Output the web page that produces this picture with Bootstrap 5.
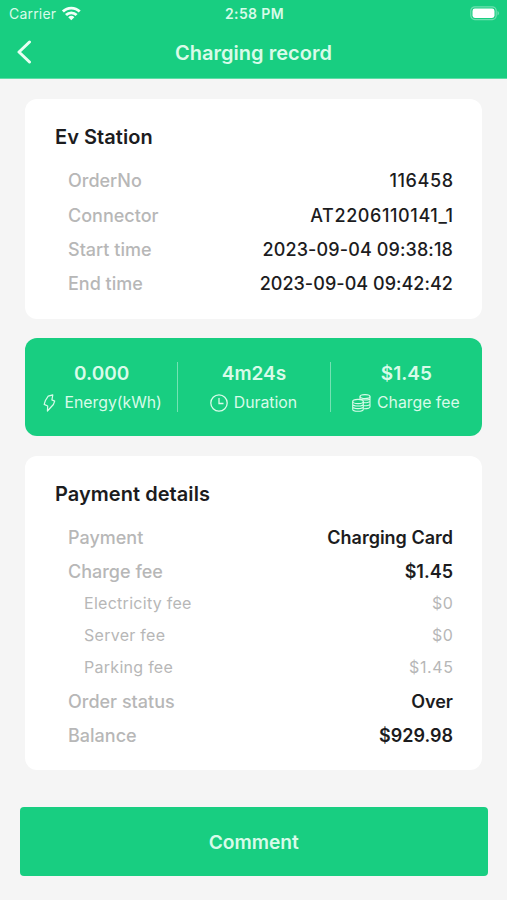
<!DOCTYPE html>
<html lang="en">
<head>
<meta charset="utf-8">
<meta name="viewport" content="width=device-width, initial-scale=1">
<title>Charging record</title>
<link href="https://cdn.jsdelivr.net/npm/bootstrap@5.3.0/dist/css/bootstrap.min.css" rel="stylesheet">
<style>
  :root { --brand: #18ce81; --ink: #1c1c1e; --muted: #b7b7b7; --mint: #d8fbe9; }
  body { font-family: Inter, "Liberation Sans", sans-serif; background: #f5f5f5; color: var(--ink); height: 900px; overflow: hidden; }
  .app-head { background: var(--brand); height: 79px; color: var(--mint); border-bottom: 1px solid #5fdda7; }
  .status-bar { height: 27px; font-size: 14px; padding: 0 7px 0 9px; }
  .status-bar > div { flex: 1 1 0; }
  .carrier { letter-spacing: .2px; }
  .clock { font-weight: 600; letter-spacing: .4px; }
  .title-bar { height: 51px; padding: 0 17px; }
  .title-bar > div { flex: 1 1 0; }
  .title-bar svg { margin-bottom: 2px; }
  .title-bar h1 { font-size: 20px; font-weight: 600; letter-spacing: .03px; }
  .panel { margin: 0 25px; border-radius: 12px; }
  .info-panel { background: #fff; padding: 22px 29px 0 30px; }
  .info-panel h2 { font-size: 20px; font-weight: 600; line-height: 32px; margin: 0 0 11px; letter-spacing: .05px; }
  .line { height: 34.2px; padding-left: 13px; font-size: 18px; }
  .line dt { font-weight: 500; color: var(--muted); }
  .line dd { font-weight: 500; margin: 0; }
  .line .strong { font-weight: 600; }
  .line .order-code { letter-spacing: .6px; margin-right: -.6px; }
  .line .stamp { letter-spacing: .12px; }
  .line .stamp-end { letter-spacing: .04px; }
  .subline { height: 31.9px; padding-left: 29px; font-size: 16px; letter-spacing: .28px; color: var(--muted); }
  .subline dt, .subline dd { font-weight: 400; margin: 0; }
  .subline dd { letter-spacing: .6px; margin-right: -.5px; }
  .station { height: 220.5px; margin-top: 19.5px; }
  .station h2 { margin-bottom: 11.4px; }
  .summary { background: var(--brand); color: var(--mint); height: 97.5px; margin-top: 19px; margin-bottom: 20.5px; }
  .metric { padding-top: 23px; }
  .metric + .metric::before { content: ""; width: 1px; height: 50px; background: #74e2b3; position: absolute; left: 0; top: 24px; }
  .metric strong { font-size: 19px; font-weight: 600; line-height: 26px; padding-left: 1px; }
  .metric span { font-size: 15.8px; line-height: 31px; }
  .metric .energy-label { padding-left: 3px; }
  .metric .bolt-icon { margin-right: 8px; }
  .metric .clock-icon { margin-right: 6px; }
  .metric .coins-icon { margin-right: 6px; }
  .payment { height: 314px; }
  .payment h2 { margin-bottom: 10.2px; }
  .payment .subline { position: relative; top: -1.3px; }
  .comment-btn, .comment-btn:hover { background: var(--brand); color: var(--mint); height: 68.5px; width: 467.5px; margin: 37px 0 0 20px; border-radius: 4px; font-size: 19.2px; font-weight: 600; border: 0; padding-top: 8px; }
</style>
<script src="https://cdn.jsdelivr.net/npm/bootstrap@5.3.0/dist/js/bootstrap.bundle.min.js"></script>
</head>
<body>
<header class="app-head">
  <div class="status-bar d-flex align-items-center">
    <div class="d-flex align-items-center"><span class="carrier">Carrier</span>
      <svg class="ms-1" width="22" height="16" viewBox="0 0 22 16" fill="none" stroke="#f2fff8" stroke-width="2.8"><path d="M2.9 5.6a11.8 11.8 0 0 1 16.8 0"/><path d="M6 9.1a7.4 7.4 0 0 1 10.6 0"/><path d="M11.3 14.2 8.2 11.2a4.5 4.5 0 0 1 6.2 0z" fill="#f2fff8" stroke="none"/></svg>
    </div>
    <span class="clock">2:58 PM</span>
    <div class="d-flex justify-content-end">
      <svg width="30" height="15" viewBox="0 0 30 15"><rect x=".8" y=".8" width="25.4" height="12.8" rx="4" fill="none" stroke="#6fe0b0" stroke-width="1.2"/><rect x="2.5" y="2.5" width="22" height="9.4" rx="2.4" fill="#fff"/><path d="M27.5 5v4.4c1.9-.7 1.9-3.7 0-4.4z" fill="#6fe0b0"/></svg>
    </div>
  </div>
  <div class="title-bar d-flex align-items-center">
    <div class="d-flex"><svg width="15" height="24" viewBox="0 0 15 24" fill="none" stroke="#e8fff3" stroke-width="3" stroke-linecap="round" stroke-linejoin="round"><path d="M12.5 2 2 12l10.5 10"/></svg></div>
    <h1 class="m-0">Charging record</h1>
    <div></div>
  </div>
</header>
<main>
  <section class="panel info-panel station">
    <h2>Ev Station</h2>
    <dl class="m-0">
      <div class="line d-flex align-items-center justify-content-between"><dt>OrderNo</dt><dd class="order-code">116458</dd></div>
      <div class="line d-flex align-items-center justify-content-between"><dt>Connector</dt><dd class="order-code">AT2206110141_1</dd></div>
      <div class="line d-flex align-items-center justify-content-between"><dt>Start time</dt><dd class="stamp">2023-09-04 09:38:18</dd></div>
      <div class="line d-flex align-items-center justify-content-between"><dt>End time</dt><dd class="stamp-end">2023-09-04 09:42:42</dd></div>
    </dl>
  </section>
  <section class="panel summary row g-0 text-center">
    <div class="metric col position-relative d-flex flex-column">
      <strong>0.000</strong>
      <span class="energy-label d-flex align-items-center justify-content-center"><svg class="bolt-icon" width="13" height="18" viewBox="0 0 13 18" fill="none" stroke="currentColor" stroke-width="1.2" stroke-linejoin="round"><path d="M5.2 2.2 9.8.9 8.9 5.9l2.8 1.2L10.400 10.500 4.400 17l.3-5L1.200 10.400 2.400 6.500z"/></svg>Energy(kWh)</span>
    </div>
    <div class="metric col position-relative d-flex flex-column">
      <strong>4m24s</strong>
      <span class="d-flex align-items-center justify-content-center"><svg class="clock-icon" width="18" height="18" viewBox="0 0 18 18" fill="none" stroke="currentColor" stroke-width="1.3"><circle cx="9" cy="9" r="8.2"/><path d="M9 4v5.5h4.5"/></svg>Duration</span>
    </div>
    <div class="metric col position-relative d-flex flex-column">
      <strong>$1.45</strong>
      <span class="d-flex align-items-center justify-content-center"><svg class="coins-icon" width="19" height="18" viewBox="0 0 19 18" fill="none" stroke="currentColor" stroke-width="1.1"><ellipse cx="13" cy="2.6" rx="5" ry="2"/><path d="M8 2.6v2.5M18 2.6v10.2c0 1.100-2.500 2-6 2M8.500 5c1 1.200 8.500 1.600 9.500-.3M11 8.600c3 .4 7-.2 7-1.700M11.500 11.700c3 .3 6.500-.4 6.500-1.800"/><ellipse cx="6" cy="7.500" rx="5.300" ry="2.100"/><path d="M.7 7.500v7.700c0 2.700 10.600 2.700 10.600 0V7.500M.7 10c0 2.700 10.600 2.700 10.600 0M.7 12.600c0 2.700 10.600 2.700 10.600 0"/></svg>Charge fee</span>
    </div>
  </section>
  <section class="panel info-panel payment">
    <h2>Payment details</h2>
    <dl class="m-0">
      <div class="line d-flex align-items-center justify-content-between"><dt>Payment</dt><dd class="strong">Charging Card</dd></div>
      <div class="line d-flex align-items-center justify-content-between"><dt>Charge fee</dt><dd class="strong">$1.45</dd></div>
      <div class="subline d-flex align-items-center justify-content-between"><dt>Electricity fee</dt><dd>$0</dd></div>
      <div class="subline d-flex align-items-center justify-content-between"><dt>Server fee</dt><dd>$0</dd></div>
      <div class="subline d-flex align-items-center justify-content-between"><dt>Parking fee</dt><dd>$1.45</dd></div>
      <div class="line d-flex align-items-center justify-content-between"><dt>Order status</dt><dd class="strong">Over</dd></div>
      <div class="line d-flex align-items-center justify-content-between"><dt>Balance</dt><dd class="strong">$929.98</dd></div>
    </dl>
  </section>
  <button type="button" class="btn comment-btn">Comment</button>
</main>
</body>
</html>
